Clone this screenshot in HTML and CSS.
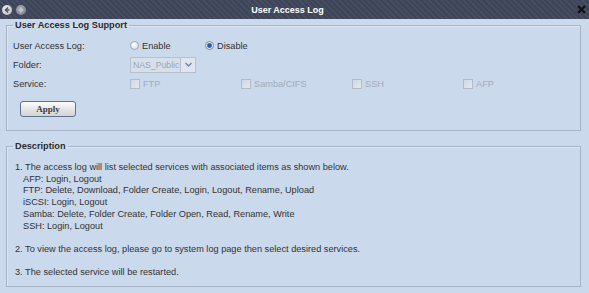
FILE: index.html
```html
<!DOCTYPE html>
<html lang="en">
<head>
  <meta charset="UTF-8" />
  <title>User Access Log</title>
  <link rel="stylesheet" href="styles.css">
</head>
<body>
  <div class="window">
    <div class="titlebar">
      <div class="nav">
        <span class="nav-btn back">
          <svg width="10" height="10" viewBox="0 0 10 10"><path d="M6 2.5 L3.5 5 L6 7.5 M3.5 5 H7.5" stroke="#55595f" stroke-width="1.6" fill="none"/></svg>
        </span>
        <span class="nav-btn fwd">
          <svg width="10" height="10" viewBox="0 0 10 10"><path d="M4 2.5 L6.5 5 L4 7.5 M6.5 5 H2.5" stroke="#c3c6cc" stroke-width="1.6" fill="none"/></svg>
        </span>
      </div>
      <div class="title">User Access Log</div>
      <div class="tools">
        <svg class="close" width="9" height="9" viewBox="0 0 9 9"><path d="M1 1 L8 8 M8 1 L1 8" stroke="#111" stroke-width="2.2"/></svg>
      </div>
    </div>

    <div class="content">
      <fieldset class="group">
        <legend>User Access Log Support</legend>

        <div class="row">
          <span class="label">User Access Log:</span>
          <div class="ctrl">
            <label class="opt"><span class="radio"></span>Enable</label>
            <label class="opt"><span class="radio on"></span>Disable</label>
          </div>
        </div>

        <div class="row">
          <span class="label">Folder:</span>
          <div class="ctrl">
            <div class="select">
              <span class="select-val">NAS_Public</span>
              <span class="select-arrow">
                <svg width="7" height="5" viewBox="0 0 7 5"><path d="M0.5 1 L3.5 4 L6.5 1" stroke="#6f86a8" stroke-width="1.4" fill="none"/></svg>
              </span>
            </div>
          </div>
        </div>

        <div class="row">
          <span class="label">Service:</span>
          <div class="ctrl services">
            <label class="opt off"><span class="check"></span>FTP</label>
            <label class="opt off"><span class="check"></span>Samba/CIFS</label>
            <label class="opt off"><span class="check"></span>SSH</label>
            <label class="opt off"><span class="check"></span>AFP</label>
          </div>
        </div>

        <button class="btn">Apply</button>
      </fieldset>

      <fieldset class="group desc">
        <legend>Description</legend>
        <p>1. The access log will list selected services with associated items as shown below.</p>
        <p class="sub">AFP: Login, Logout</p>
        <p class="sub">FTP: Delete, Download, Folder Create, Login, Logout, Rename, Upload</p>
        <p class="sub">iSCSI: Login, Logout</p>
        <p class="sub">Samba: Delete, Folder Create, Folder Open, Read, Rename, Write</p>
        <p class="sub">SSH: Login, Logout</p>
        <p class="gap">2. To view the access log, please go to system log page then select desired services.</p>
        <p class="gap">3. The selected service will be restarted.</p>
      </fieldset>
    </div>
  </div>
</body>
</html>
```

FILE: styles.css
```css
body {
  margin: 0;
  background: #cad9eb;
  font-family: 'Liberation Sans', Arial, sans-serif;
  font-size: 9.2px;
  color: #333;
}

.window {
  width: 589px;
  height: 293px;
  background: #cad9eb;
  overflow: hidden;
}

/* title bar */
.titlebar {
  height: 19px;
  display: grid;
  grid-template-columns: 1fr auto 1fr;
  align-items: center;
  background: repeating-linear-gradient(45deg, #474d61 0 2px, #3e4457 2px 4px);
}

.nav {
  display: flex;
  gap: 4px;
  padding-left: 2px;
}

.nav-btn {
  width: 10px;
  height: 10px;
  border-radius: 50%;
  display: flex;
}

.nav-btn.back {
  background: radial-gradient(circle at 40% 35%, #eceef1, #b4b8bf);
}

.nav-btn.fwd {
  background: radial-gradient(circle at 40% 35%, #a3a7b0, #787d88);
}

.title {
  color: #fff;
  font-weight: bold;
  font-size: 9px;
  padding-right: 14px;
}

.tools {
  display: flex;
  justify-content: flex-end;
  padding-right: 3px;
}

/* content */
.content {
  padding: 0 8px 0 6px;
}

.group {
  margin: 0;
  padding: 5px 6px 13px;
  border: 1px solid #a9b4c6;
  box-shadow: inset 1px 1px 0 #dde6f1;
}

.group legend {
  padding: 0 2px;
  font-weight: bold;
  line-height: 12px;
  color: #2c2c2c;
}

.row {
  display: flex;
  align-items: center;
  height: 19px;
}

.label {
  width: 117px;
}

.ctrl {
  display: flex;
  align-items: center;
}

.opt {
  display: flex;
  align-items: center;
  gap: 3px;
  width: 75px;
}

.services .opt {
  width: 111px;
}

.opt.off {
  color: #a3acb8;
}

.radio {
  width: 9px;
  height: 9px;
  box-sizing: border-box;
  border-radius: 50%;
  border: 1px solid #9ea6b1;
  background: radial-gradient(circle at 40% 35%, #fff, #d3d8de);
}

.radio.on {
  background: radial-gradient(circle, #1e5fb5 0 1.8px, #6b9bd6 2.4px, #e9eef3 3px);
  border-color: #7f8a98;
}

.check {
  width: 10px;
  height: 10px;
  box-sizing: border-box;
  border: 1px solid #b3bbc6;
  background: linear-gradient(135deg, #d0d8e2, #e3e9f0);
}

.select {
  display: flex;
  width: 66px;
  height: 16px;
  box-sizing: border-box;
  border: 1px solid #b7c1cd;
  background: #d6e0ec;
}

.select-val {
  flex: 1;
  padding-left: 2px;
  line-height: 14px;
  font-size: 8.7px;
  color: #9ba5b2;
  white-space: nowrap;
  overflow: hidden;
}

.select-arrow {
  width: 14px;
  flex: none;
  border-left: 1px solid #b7c1cd;
  background: #dfe6ef;
  display: flex;
  align-items: center;
  justify-content: center;
}

.btn {
  display: block;
  margin: 8px 0 0 7px;
  width: 56px;
  height: 16px;
  padding: 0;
  border: 1px solid #5f7290;
  border-radius: 3px;
  background: linear-gradient(#fdfdfd, #e2e2e2 60%, #d4d4d4);
  font-family: 'Liberation Serif', serif;
  font-weight: bold;
  font-size: 9px;
  color: #3a3a3a;
}

.desc {
  margin-top: 9px;
  padding: 10px 6px 7px;
}

.desc p {
  margin: 0;
  line-height: 11.7px;
  padding-left: 2px;
}

.desc p.sub {
  padding-left: 10px;
}

.desc p.gap {
  margin-top: 11.7px;
}
```
